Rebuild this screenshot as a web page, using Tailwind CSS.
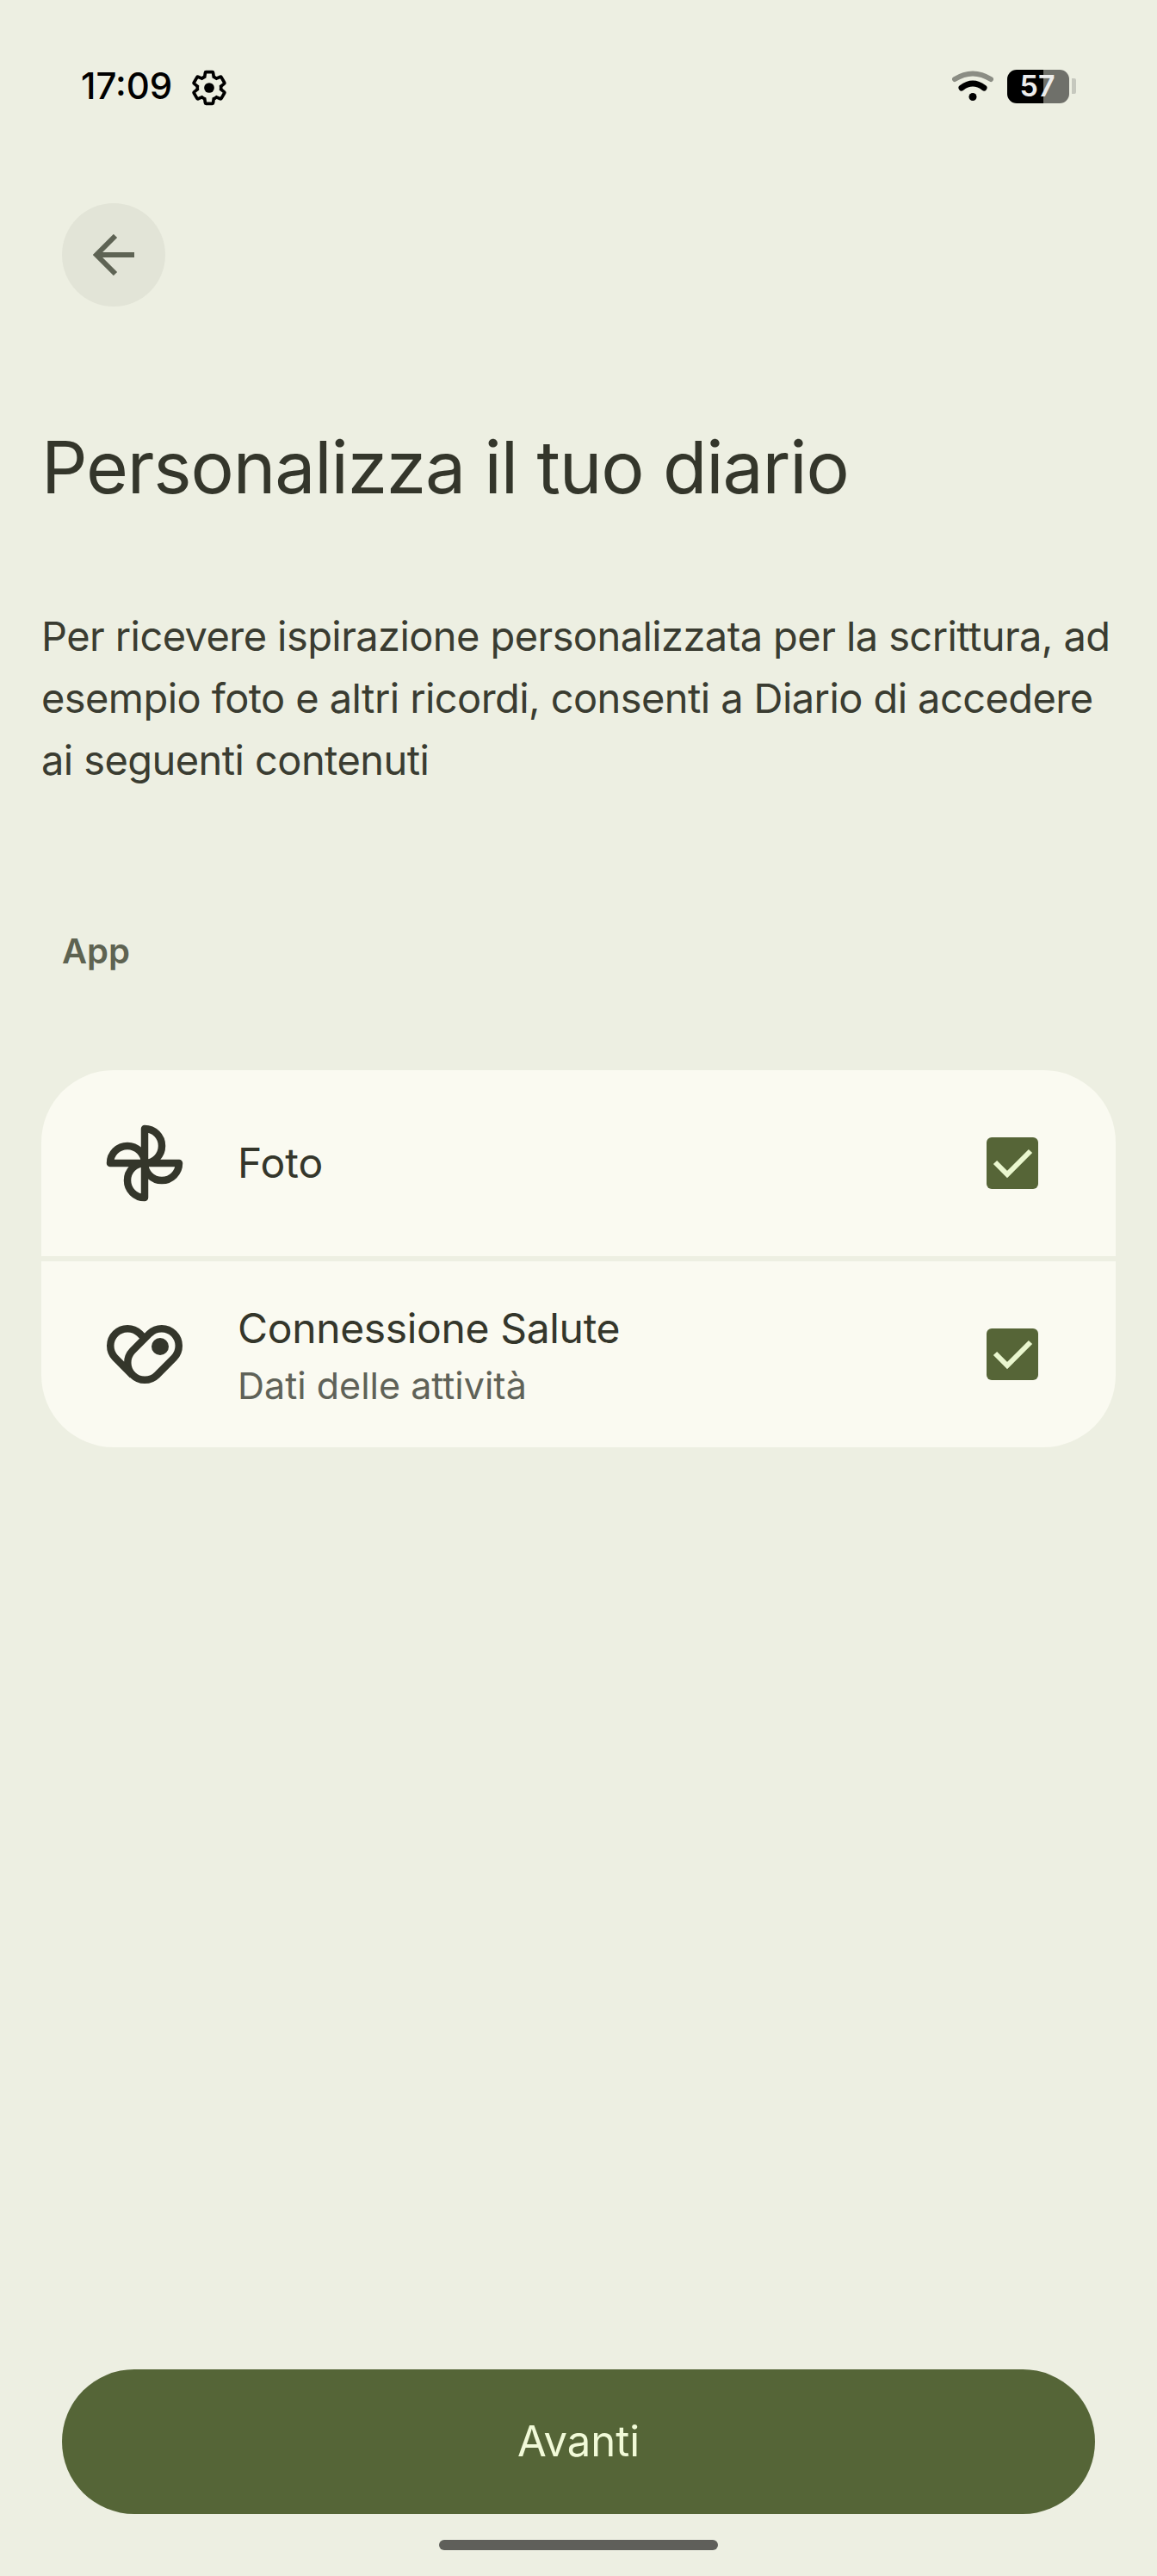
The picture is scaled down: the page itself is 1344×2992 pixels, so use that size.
<!doctype html>
<html lang="it">
<head>
<meta charset="UTF-8" />
<title>Personalizza il tuo diario</title>
<script src="https://cdn.jsdelivr.net/npm/@tailwindcss/browser@4"></script>
</head>
<body class="bg-[#edefe2]">
<div class="w-[1344px] h-[2992px] flex flex-col font-['Inter','Noto_Sans',sans-serif] text-[#34362b] overflow-hidden">

  <!-- status bar -->
  <div class="h-[200px] flex items-center justify-between pl-[94px] pr-[94px] shrink-0">
    <div class="flex items-center">
      <span class="text-[42px] leading-none font-medium text-black">17:09</span>
      <svg class="ml-[21px] mt-[4px] w-[44px] h-[44px]" viewBox="0 0 24 24" fill="none" stroke="#000" stroke-width="2">
        <path d="M19.43 12.98c.04-.32.07-.64.07-.98 0-.34-.03-.66-.07-.98l2.11-1.65c.19-.15.24-.42.12-.64l-2-3.46c-.09-.16-.26-.25-.44-.25-.06 0-.12.01-.17.03l-2.49 1c-.52-.4-1.08-.73-1.69-.98l-.38-2.65C14.46 2.18 14.25 2 14 2h-4c-.25 0-.46.18-.49.42l-.38 2.65c-.61.25-1.17.59-1.69.98l-2.49-1c-.06-.02-.12-.03-.18-.03-.17 0-.34.09-.43.25l-2 3.46c-.13.22-.07.49.12.64l2.11 1.65c-.04.32-.07.65-.07.98 0 .33.03.66.07.98l-2.11 1.65c-.19.15-.24.42-.12.64l2 3.46c.09.16.26.25.44.25.06 0 .12-.01.17-.03l2.49-1c.52.4 1.08.73 1.69.98l.38 2.65c.03.24.24.42.49.42h4c.25 0 .46-.18.49-.42l.38-2.65c.61-.25 1.17-.59 1.69-.98l2.49 1c.06.02.12.03.18.03.17 0 .34-.09.43-.25l2-3.46c.12-.22.07-.49-.12-.64l-2.11-1.65z"/>
        <circle cx="12" cy="12" r="3.2" fill="#000" stroke="none"/>
      </svg>
    </div>
    <div class="flex items-center">
      <svg class="w-[48px] h-[36px]" viewBox="0 0 48 36" fill="none" stroke-linecap="round">
        <path d="M3 10Q24 -3 45 10" stroke="#8b8d84" stroke-width="6"/>
        <path d="M11 20Q24 10 37 20" stroke="#000" stroke-width="7"/>
        <circle cx="24" cy="30.5" r="4.5" fill="#000"/>
      </svg>
      <div class="relative ml-[16px] w-[72px] h-[39px] rounded-[11px] overflow-hidden flex">
        <div class="w-[42px] bg-black"></div>
        <div class="flex-1 bg-[#6f706a]"></div>
        <span class="absolute inset-0 flex items-center justify-center pr-[2px] text-[34px] leading-none font-semibold text-[#ececec]">57</span>
      </div>
      <div class="ml-[3px] w-[5px] h-[18px] rounded-r-[2px] bg-[#c6c8be]"></div>
    </div>
  </div>

  <!-- back button -->
  <div class="mt-[36px] ml-[72px] w-[120px] h-[120px] rounded-full bg-[#e2e4d7] flex items-center justify-center shrink-0">
    <svg class="w-[48px] h-[48px]" viewBox="0 0 48 48" fill="none" stroke="#5e6354" stroke-width="6">
      <path d="M48 24H4M26 2L4 24L26 46"/>
    </svg>
  </div>

  <h1 class="mt-[137px] ml-[48px] text-[84px] leading-[100px] font-normal tracking-[-1.15px] text-[#34362b]">Personalizza il tuo diario</h1>

  <p class="mt-[110px] mx-[48px] text-[47px] leading-[72px] tracking-[-0.58px] text-[#3a3c31]">Per ricevere ispirazione personalizzata per la scrittura, ad esempio foto e altri ricordi, consenti a Diario di accedere ai seguenti contenuti</p>

  <h2 class="mt-[158px] ml-[72px] text-[40px] leading-[56px] font-semibold text-[#5e6351]">App</h2>

  <!-- list -->
  <div class="mt-[110px] mx-[48px] rounded-[84px] bg-[#fafaf1] overflow-hidden">
    <div class="h-[216px] flex items-center pl-[76px] pr-[90px]">
      <svg class="w-[88px] h-[88px] shrink-0 overflow-visible" viewBox="0 0 88 88" fill="none" stroke="#34362b" stroke-width="8.5" stroke-linejoin="round" stroke-linecap="round">
        <path d="M4 44H84M44 4V84M4 44A20 20 0 0 1 44 44M44 4A20 20 0 0 1 44 44M84 44A20 20 0 0 1 44 44M44 84A20 20 0 0 1 44 44"/>
      </svg>
      <div class="ml-[64px] flex-1 text-[48px] leading-[64px] text-[#34362b]">Foto</div>
      <div class="w-[60px] h-[60px] rounded-[6px] bg-[#566537] shrink-0">
        <svg class="w-[60px] h-[60px]" viewBox="0 0 60 60" fill="none" stroke="#eaf7cf" stroke-width="6"><path d="M10 29L24 43L51 16"/></svg>
      </div>
    </div>
    <div class="h-[6px] bg-[#edefe2]"></div>
    <div class="h-[216px] flex items-center pl-[76px] pr-[90px]">
      <svg class="w-[88px] h-[69px] shrink-0 overflow-visible" viewBox="0 0 88 69" fill="none" stroke="#34362b" stroke-width="8.5" stroke-linejoin="round">
        <path d="M49.86 9.86A20 20 0 0 1 78.14 38.14L58.14 58.14A20 20 0 0 1 29.86 29.86Z"/>
        <path d="M44 15.7L38.14 9.86A20 20 0 0 0 9.86 38.14L29.86 58.14"/>
        <circle cx="62" cy="25" r="10" fill="#34362b" stroke="none"/>
      </svg>
      <div class="ml-[64px] mt-[3px] flex-1">
        <div class="text-[48px] leading-[64px] tracking-[-0.35px] text-[#34362b]">Connessione Salute</div>
        <div class="mt-[4px] text-[43px] leading-[60px] text-[#5f6258]">Dati delle attività</div>
      </div>
      <div class="w-[60px] h-[60px] rounded-[6px] bg-[#566537] shrink-0">
        <svg class="w-[60px] h-[60px]" viewBox="0 0 60 60" fill="none" stroke="#eaf7cf" stroke-width="6"><path d="M10 29L24 43L51 16"/></svg>
      </div>
    </div>
  </div>

  <!-- bottom -->
  <div class="mt-auto mx-[72px] h-[168px] rounded-full bg-[#556537] flex items-center justify-center text-[49px] text-[#f1fad8]">Avanti</div>
  <div class="mt-[30px] mb-[30px] mx-auto w-[324px] h-[12px] rounded-full bg-[#5f5f5a] shrink-0"></div>
</div>
</body>
</html>
